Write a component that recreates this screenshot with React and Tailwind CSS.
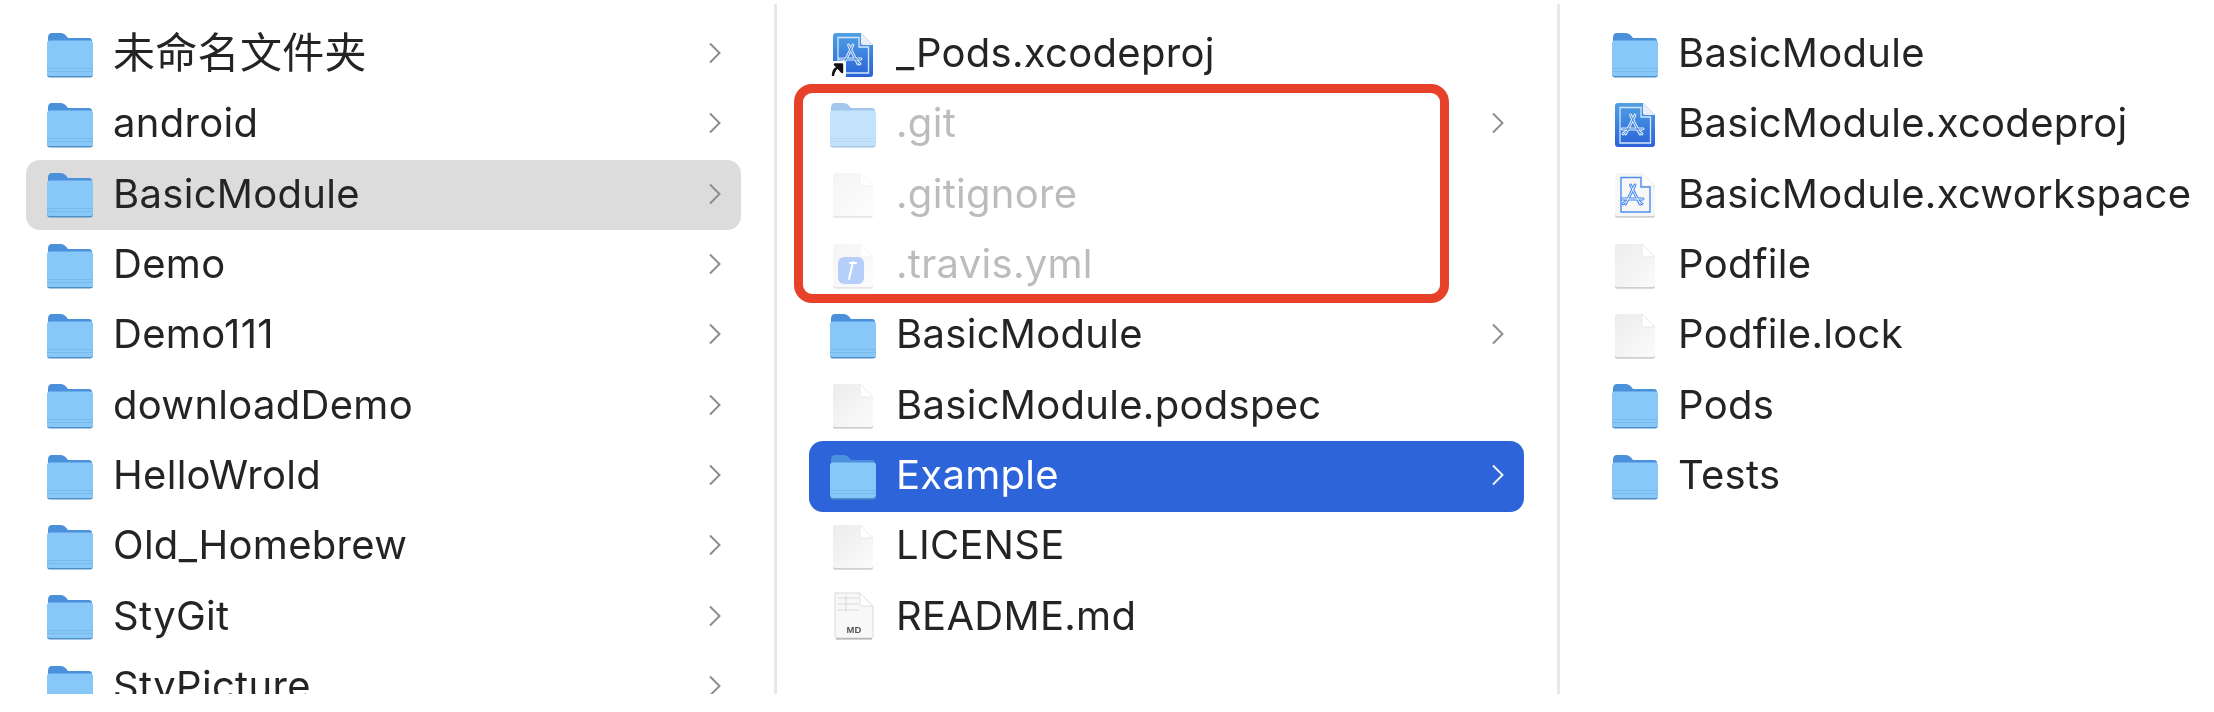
function Folder() {
  return (
    <svg width="48" height="46" viewBox="0 0 48 46" className="shrink-0">
      <path d="M2 6 Q2 1 6 1 H15 Q18 1 20 3.5 L22 6 H43 Q46 6 46 9 V20 H2 Z" fill="#4a90da" />
      <path d="M1 11 Q1 8.5 4 8.5 H44 Q47 8.5 47 11 V41 Q47 44 44 44 H4 Q1 44 1 41 Z" fill="#87c8f8" />
      <rect x="1" y="36" width="46" height="1" fill="#79b9ec" />
      <rect x="1" y="39" width="46" height="1" fill="#79b9ec" />
      <path d="M1 41 Q1 44 4 44 H44 Q47 44 47 41 V42 Q47 45.5 44 45.5 H4 Q1 45.5 1 42 Z" fill="#4d8fc9" />
    </svg>
  );
}

function FileBase({ children, fill = "#f5f5f5" }) {
  return (
    <svg width="48" height="48" viewBox="0 0 48 48" className="shrink-0">
      <defs>
        <linearGradient id="fileGrad" x1="0" y1="0" x2="1" y2="1">
          <stop offset="0" stopColor="#ececec" />
          <stop offset="1" stopColor="#fbfbfb" />
        </linearGradient>
      </defs>
      <path d="M6 3 Q4 3 4 5 V44 Q4 46 6 46 H42 Q44 46 44 44 V15 L32 2.5 H6 Z" fill="#cfcfcf" transform="translate(0 0.8)" />
      <path d="M6 2 Q4 2 4 4 V43 Q4 45 6 45 H42 Q44 45 44 43 V15 L31 2 Z" fill={fill === "#f5f5f5" ? "url(#fileGrad)" : fill} />
      <path d="M31 2 V13 Q31 15 33 15 H44 Z" fill="#ffffff" stroke="#dddddd" strokeWidth="0.6" />
      {children}
    </svg>
  );
}

function AppA({ color, under }) {
  const paths = ["M24 14 L14.5 33", "M19.5 14 L29 33", "M11 28 H32", "M12 33 L14.5 30.5", "M31 33 L28.5 30.5"];
  return (
    <g fill="none" strokeLinecap="round">
      {paths.map((d) => (
        <path key={d} d={d} stroke={color} strokeWidth="2.8" />
      ))}
      {paths.map((d) => (
        <path key={d + "u"} d={d} stroke={under} strokeWidth="1" />
      ))}
    </g>
  );
}

function Xcodeproj({ alias }) {
  return (
    <svg width="48" height="48" viewBox="0 0 48 48" className="shrink-0">
      <defs>
        <linearGradient id="xcGrad" x1="0" y1="0" x2="0" y2="1">
          <stop offset="0" stopColor="#4fa0e4" />
          <stop offset="1" stopColor="#2a62d8" />
        </linearGradient>
      </defs>
      <path d="M7 2 Q4 2 4 5 V43 Q4 46 7 46 H41 Q44 46 44 43 V14 L32 2 Z" fill="url(#xcGrad)" />
      <path d="M32 2 V12 Q32 14 34 14 H44 Z" fill="#e9eef6" />
      <path d="M9 6.5 H30 V16 H39.5 V42 H9 Z" fill="none" stroke="#d6e6fa" strokeWidth="1.3" />
      <AppA color="#e6f0fc" under="#3f84dc" />
      {alias && (
        <g>
          <rect x="0" y="30" width="17" height="17" rx="2" fill="#ffffff" />
          <path d="M4 45 Q4 38 9 36 M6 33.5 H13 V41 Z" stroke="#111111" strokeWidth="2.4" fill="#111111" strokeLinejoin="round" />
        </g>
      )}
    </svg>
  );
}

function Workspace() {
  return (
    <FileBase fill="#f7f7f7">
      <path d="M10 6.5 H30 V16 H39 V41 H10 Z" fill="none" stroke="#4c8df0" strokeWidth="1.4" />
      <AppA color="#3f86ee" under="#f5f8fd" />
    </FileBase>
  );
}

function Travis() {
  return (
    <FileBase>
      <rect x="9" y="15" width="26" height="27" rx="6" fill="#6f9ff6" />
      <path d="M24 20 L20 37" stroke="#ffffff" strokeWidth="2" strokeLinecap="round" />
      <path d="M21 21 H27" stroke="#ffffff" strokeWidth="2.2" strokeLinecap="round" />
    </FileBase>
  );
}

function Readme() {
  return (
    <svg width="48" height="50" viewBox="0 0 48 50" className="shrink-0">
      <path d="M7 1 H31 L43 14 V46 H7 Z" fill="#a8a8a8" transform="translate(0 1.6)" />
      <path d="M6 1 H31 L44 14 V45 Q44 46 43 46 H7 Q6 46 6 45 Z" fill="#f8f8f8" stroke="#d2d2d2" strokeWidth="0.8" />
      <path d="M31 1 V13 Q31 14 32 14 H44 Z" fill="#ffffff" stroke="#d5d5d5" strokeWidth="0.7" />
      <path d="M9 6 H30 M9 12 H30 M9 18 H30 M17 3 V20" stroke="#dadada" strokeWidth="1.1" fill="none" />
      <text x="25" y="41" textAnchor="middle" fontSize="9.5" fontWeight="700" fill="#555555" fontFamily="Liberation Sans, sans-serif">MD</text>
    </svg>
  );
}

function Chevron({ white }) {
  return (
    <svg width="14" height="22" viewBox="0 0 14 22" className="-mt-[3px] shrink-0">
      <path d="M2 1.5 L11.5 11 L2 20.5" fill="none" stroke={white ? "#f2f5fd" : "#8b8b8b"} strokeWidth="1.9" />
    </svg>
  );
}

function Row({ icon, name, arrow, state, large }) {
  const bg = state === "gray" ? "bg-[#dcdcdc]" : state === "blue" ? "bg-[#2d64d9]" : "";
  const text = state === "blue" ? "text-white" : state === "dim" ? "text-[#bcbcbc]" : "text-[#242424]";
  const size = large ? "text-[42px]" : "text-[40px]";
  return (
    <div className={`flex h-[70.33px] shrink-0 items-center rounded-[14px] pl-5 pr-[19px] ${bg}`}>
      <div className={`flex w-[48px] shrink-0 justify-center ${state === "dim" ? "opacity-50" : ""}`}>{icon}</div>
      <span className={`ml-[19px] flex-1 whitespace-nowrap pb-[3px] leading-none tracking-[0.3px] ${size} ${text}`}>{name}</span>
      {arrow && <Chevron white={state === "blue"} />}
    </div>
  );
}

const col1 = ["未命名文件夹", "android", "BasicModule", "Demo", "Demo111", "downloadDemo", "HelloWrold", "Old_Homebrew", "StyGit", "StyPicture"];

const col3 = [
  [<Folder />, "BasicModule"],
  [<Xcodeproj />, "BasicModule.xcodeproj"],
  [<Workspace />, "BasicModule.xcworkspace"],
  [<FileBase />, "Podfile"],
  [<FileBase />, "Podfile.lock"],
  [<Folder />, "Pods"],
  [<Folder />, "Tests"],
];

export default function App() {
  return (
    <div className="h-[712px] w-[2214px] bg-white font-['Inter','Noto_Sans_CJK_SC',sans-serif] blur-[0.6px]">
      <div className="flex h-[694px] overflow-hidden pt-1">
        <div className="flex w-[776.5px] shrink-0 flex-col border-r-[3px] border-[#e8e8e8] pl-[26px] pr-[32.5px] pt-[15.5px]">
          {col1.map((n, i) => (
            <Row key={n} icon={<Folder />} name={n} arrow large={i === 0} state={n === "BasicModule" ? "gray" : undefined} />
          ))}
        </div>
        <div className="relative flex w-[783.5px] shrink-0 flex-col border-r-[3px] border-[#e8e8e8] pl-[32.5px] pr-[33px] pt-[15.5px]">
          <Row icon={<Xcodeproj alias />} name="_Pods.xcodeproj" />
          <Row icon={<Folder />} name=".git" arrow state="dim" />
          <Row icon={<FileBase />} name=".gitignore" state="dim" />
          <Row icon={<Travis />} name=".travis.yml" state="dim" />
          <Row icon={<Folder />} name="BasicModule" arrow />
          <Row icon={<FileBase />} name="BasicModule.podspec" />
          <Row icon={<Folder />} name="Example" arrow state="blue" />
          <Row icon={<FileBase />} name="LICENSE" />
          <Row icon={<Readme />} name="README.md" />
          <div className="absolute left-[17.5px] top-[80px] h-[219px] w-[655px] rounded-[18px] border-[9px] border-[#e8412a]" />
        </div>
        <div className="flex min-w-0 flex-1 flex-col pl-[31px] pt-[15.5px]">
          {col3.map(([icon, n]) => (
            <Row key={n} icon={icon} name={n} />
          ))}
        </div>
      </div>
    </div>
  );
}
